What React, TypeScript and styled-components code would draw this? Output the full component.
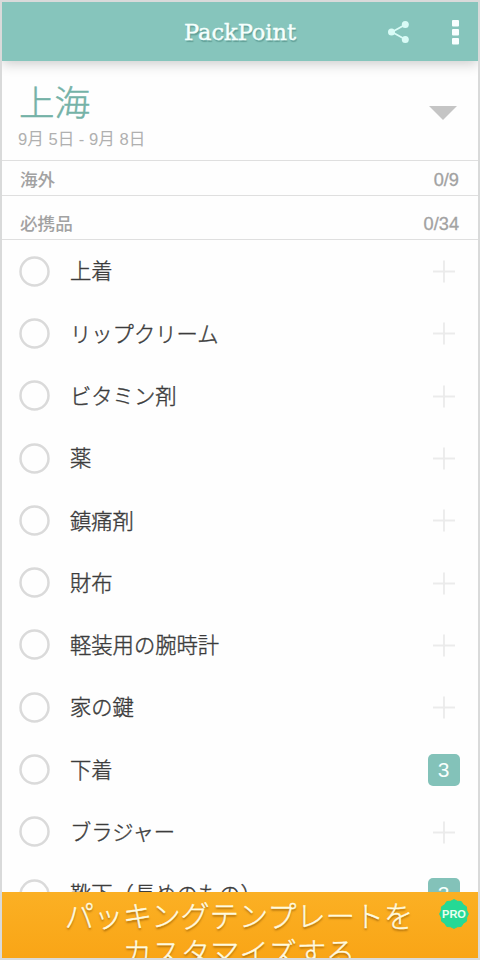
import React from "react";
import styled, { createGlobalStyle } from "styled-components";

const GlobalStyle = createGlobalStyle`
  * { box-sizing: border-box; }
  body {
    margin: 0;
    background: #d9dada;
    font-family: "Liberation Sans", "Noto Sans CJK JP", sans-serif;
  }
`;

const Screen = styled.div`
  width: 480px;
  height: 960px;
  padding: 2px 2px 2px;
  background: #d9dada;
  overflow: hidden;
`;

const Phone = styled.main`
  display: flex;
  flex-direction: column;
  height: 956px;
  background: #fefefe;
  overflow: hidden;
`;

const AppBar = styled.header`
  display: grid;
  grid-template-columns: 1fr 240px 1fr;
  align-items: center;
  flex: none;
  height: 59px;
  background: #86c5bc;
  box-shadow: 0 3px 12px rgba(0, 0, 0, 0.2);
`;

const Brand = styled.h1`
  grid-column: 2;
  margin: 0;
  padding-top: 1px;
  text-align: center;
  font: 400 22.5px/30px "DejaVu Serif Condensed", "DejaVu Serif", serif;
  color: #f6fffd;
  white-space: nowrap;
  -webkit-text-stroke: 0.4px #f6fffd;
  text-shadow: 1px 1.5px 1px rgba(40, 100, 92, 0.4);
  transform: scaleX(1.11);
`;

const Actions = styled.div`
  display: flex;
  justify-content: flex-end;
  align-items: center;
  gap: 42px;
  padding-right: 19px;
`;

const Trip = styled.section`
  display: flex;
  justify-content: space-between;
  align-items: center;
  flex: none;
  height: 100px;
  padding: 4px 21px 0 16px;
  border-bottom: 1.5px solid #dfdfdf;
`;

const City = styled.h2`
  margin: 0;
  padding: 3px 0 0 1px;
  font: 300 35.5px/46px "Noto Sans CJK JP", sans-serif;
  color: #74b2a7;
  -webkit-text-stroke: 0.5px #74b2a7;
`;

const Dates = styled.p`
  margin: 6px 0 0;
  font-size: 16.6px;
  line-height: 20px;
  font-weight: 400;
  color: #b0b0b0;
`;

const Group = styled.div<{ $height: number; $top: number }>`
  display: flex;
  justify-content: space-between;
  align-items: center;
  flex: none;
  height: ${(p) => p.$height}px;
  padding: ${(p) => p.$top}px 19px 0 18px;
  border-bottom: 1.5px solid #dfdfdf;
  font-size: 17.6px;
  line-height: 24px;
  font-weight: 500;
  color: #a2a2a2;
`;

const Tally = styled.span`
  font-size: 18.2px;
  -webkit-text-stroke: 0.3px #a2a2a2;
`;

const List = styled.ul`
  flex: 1;
  min-height: 0;
  margin: 0;
  padding: 0;
  list-style: none;
  overflow: hidden;
`;

const Item = styled.li`
  display: flex;
  align-items: center;
  height: 62.3px;
  padding: 0 18.5px 0 17px;
`;

const CircleIcon = styled.svg`
  flex: none;
  width: 31px;
  height: 31px;
  fill: none;
  stroke: #dadada;
  stroke-width: 2.5px;
`;

const Label = styled.span`
  flex: 1;
  padding: 0 0 1.5px 20px;
  font: 300 21.3px/30px "Noto Sans CJK JP", sans-serif;
  color: #3c3c3c;
  -webkit-text-stroke: 0.4px #3c3c3c;
  white-space: nowrap;
`;

const Count = styled.span`
  display: grid;
  place-items: center;
  width: 32px;
  height: 32px;
  border-radius: 5px;
  background: #83c2b9;
  color: #f7fffd;
  font-size: 21px;
  line-height: 32px;
`;

const Promo = styled.footer`
  position: relative;
  flex: none;
  height: 66px;
  padding-top: 4px;
  background: linear-gradient(#fbb024, #f9a516);
  overflow: hidden;
  text-align: center;
  font: 300 29.2px/37px "Noto Sans CJK JP", sans-serif;
  color: #fffbe0;
  -webkit-text-stroke: 0.4px #fffbe0;
  text-shadow: 0 1.5px 2px rgba(120, 70, 0, 0.6);
`;

const PromoLine = styled.div`
  padding-right: 2px;
  white-space: nowrap;
`;

const Seal = styled.svg`
  position: absolute;
  top: 6px;
  right: 8px;
  text-shadow: none;
  -webkit-text-stroke: 0;
`;

const ShareIcon = () => (
  <svg width="22" height="24" viewBox="0 0 22 24" fill="#d9fbf6">
    <path d="M17.5 4.500 4 12l13.500 7.500" fill="none" stroke="#d9fbf6" strokeWidth="1.8" />
    <circle cx="17.300" cy="4.500" r="3.500" />
    <circle cx="3.500" cy="12" r="3.500" />
    <circle cx="17.300" cy="19.500" r="3.500" />
  </svg>
);

const MoreIcon = () => (
  <svg width="7" height="26" viewBox="0 0 7 26" fill="#f8ffff">
    <rect y="1" width="7" height="6.500" rx="1" />
    <rect y="10" width="7" height="6.500" rx="1" />
    <rect y="19" width="7" height="6.500" rx="1" />
  </svg>
);

const ExpandIcon = () => (
  <svg width="28" height="14" viewBox="0 0 28 14">
    <path d="M0 0h28L14 14z" fill="#c5c5c5" />
  </svg>
);

const PlusIcon = () => (
  <svg width="32" height="24" viewBox="0 0 32 24">
    <path d="M5 12.500h22M16 1.500v22" stroke="#ebebeb" strokeWidth="1.8" />
  </svg>
);

const sealPoints = Array.from({ length: 24 }, (_, i) => {
  const r = i % 2 ? 13.2 : 14.4;
  const a = (i * Math.PI) / 12;
  return `${16 + r * Math.cos(a)},${16 + r * Math.sin(a)}`;
}).join(" ");

const items: { name: string; count?: number }[] = [
  { name: "上着" },
  { name: "リップクリーム" },
  { name: "ビタミン剤" },
  { name: "薬" },
  { name: "鎮痛剤" },
  { name: "財布" },
  { name: "軽装用の腕時計" },
  { name: "家の鍵" },
  { name: "下着", count: 3 },
  { name: "ブラジャー" },
  { name: "靴下（長めのもの）", count: 3 },
];

export default function App() {
  return (
    <Screen>
      <GlobalStyle />
      <Phone>
        <AppBar>
          <Brand>PackPoint</Brand>
          <Actions>
            <ShareIcon />
            <MoreIcon />
          </Actions>
        </AppBar>
        <Trip>
          <div>
            <City>上海</City>
            <Dates>9月 5日 - 9月 8日</Dates>
          </div>
          <ExpandIcon />
        </Trip>
        <Group $height={35} $top={4}>
          海外<Tally>0/9</Tally>
        </Group>
        <Group $height={44} $top={12}>
          必携品<Tally>0/34</Tally>
        </Group>
        <List>
          {items.map((item) => (
            <Item key={item.name}>
              <CircleIcon viewBox="0 0 31 31">
                <circle cx="15.500" cy="15.500" r="14" />
              </CircleIcon>
              <Label>{item.name}</Label>
              {item.count ? <Count>{item.count}</Count> : <PlusIcon />}
            </Item>
          ))}
        </List>
        <Promo>
          <PromoLine>パッキングテンプレートを</PromoLine>
          <PromoLine>カスタマイズする</PromoLine>
          <Seal width="32" height="32" viewBox="0 0 32 32">
            <polygon points={sealPoints} fill="#25d995" stroke="#25d995" strokeWidth="1" strokeLinejoin="round" />
            <text
              x="16"
              y="20"
              textAnchor="middle"
              fontFamily="Liberation Sans, sans-serif"
              fontSize="11"
              fontWeight="700"
              fill="#e9fff0"
            >
              PRO
            </text>
          </Seal>
        </Promo>
      </Phone>
    </Screen>
  );
}
